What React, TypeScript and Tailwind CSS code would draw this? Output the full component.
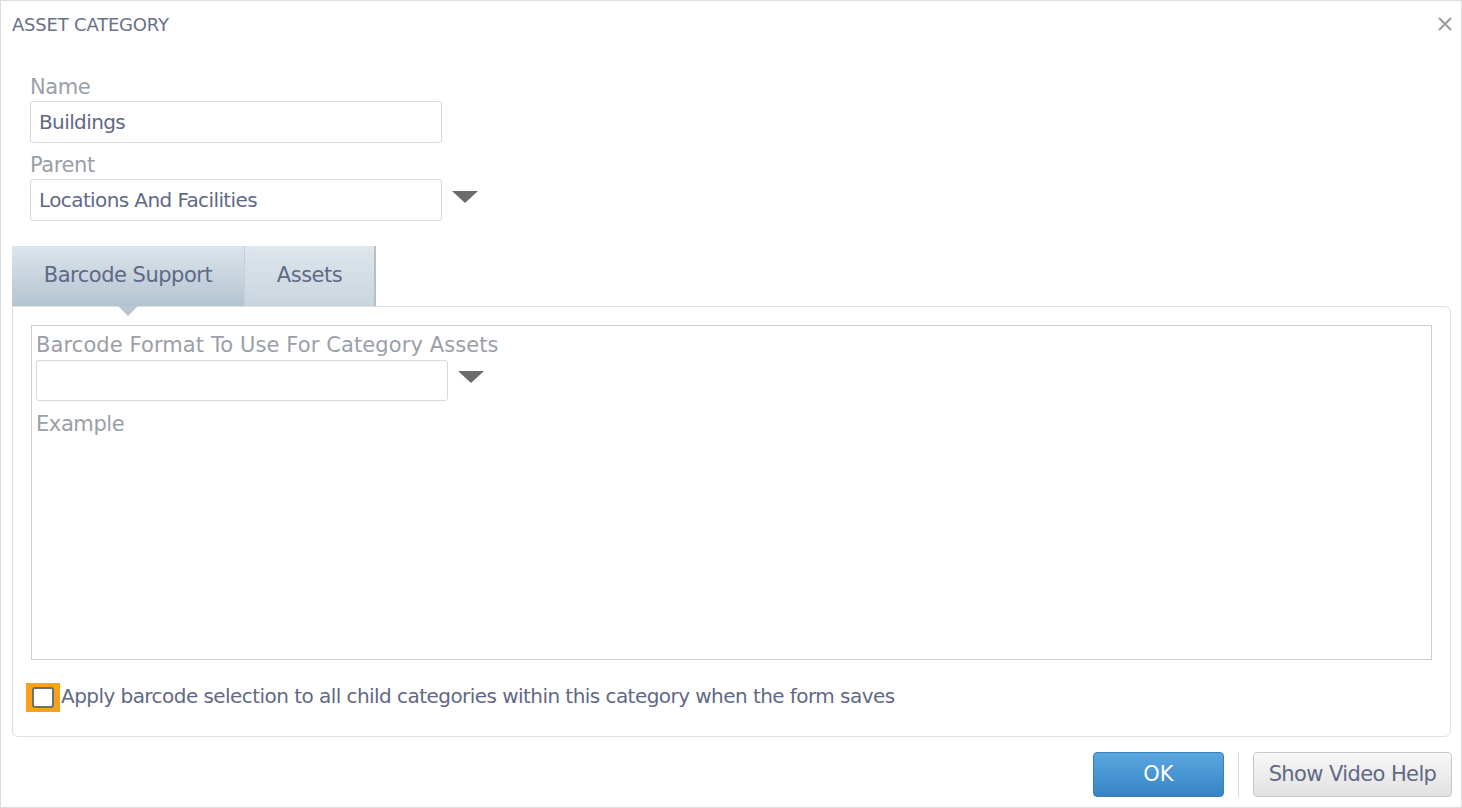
import React from "react";

const Tri = () => (
  <svg width="28" height="14" viewBox="0 0 28 14" className="shrink-0">
    <polygon points="1,1 27,1 14,13" fill="#6b6b6b" />
  </svg>
);

export default function App() {
  return (
    <div
      className="w-[1462px] h-[808px] bg-white flex flex-col border border-[#dcdcdc] overflow-hidden"
      style={{ fontFamily: "Tahoma, 'DejaVu Sans', 'Noto Sans', sans-serif" }}
    >
      <div className="flex items-center justify-between h-[46px] pl-[11px] pr-[8px]">
        <div className="text-[18px] text-[#68718b] tracking-[-0.2px]">ASSET CATEGORY</div>
        <svg width="14" height="14" viewBox="0 0 14 14" className="mr-[1px]">
          <path d="M1 1 L13 13 M13 1 L1 13" stroke="#9a9a9a" strokeWidth="2" />
        </svg>
      </div>
      <div className="pl-[29px] pt-[26px] flex flex-col">
        <div className="text-[21px] leading-[28px] text-[#9aa0a8] tracking-[-0.4px]">Name</div>
        <div className="w-[412px] h-[42px] border border-[#d9d9d9] rounded-[3px] flex items-center px-[8px] text-[20px] text-[#5f6985] tracking-[-0.6px]">
          Buildings
        </div>
        <div className="text-[21px] leading-[28px] text-[#9aa0a8] mt-[8px] tracking-[-0.4px]">Parent</div>
        <div className="flex items-start gap-[9px]">
          <div className="w-[412px] h-[42px] border border-[#d9d9d9] rounded-[3px] flex items-center px-[8px] text-[20px] text-[#5f6985] tracking-[-0.6px]">
            Locations And Facilities
          </div>
          <div className="pt-[11px]"><Tri /></div>
        </div>
      </div>
      <div className="pl-[11px] pr-[10px] mt-[25px] flex flex-col">
        <div className="flex h-[60px]">
          <div className="relative w-[233px] h-full flex items-center justify-center bg-gradient-to-b from-[#dde5ec] to-[#b3c4d1] border-r border-[#c4cfd8] text-[21px] text-[#5f6985] tracking-[-0.5px]">
            Barcode Support
            <div className="absolute left-[106px] -bottom-[10px] w-0 h-0 border-l-[10px] border-r-[10px] border-t-[10px] border-l-transparent border-r-transparent border-t-[#b6c6d2]" />
          </div>
          <div className="w-[131px] h-full flex items-center justify-center bg-gradient-to-b from-[#dfe6ec] to-[#c9d5de] border-r-2 border-[#b3c1cc] text-[21px] text-[#5f6985] tracking-[-0.5px]">
            Assets
          </div>
        </div>
        <div className="border border-[#e0e0e0] rounded-b-[6px] rounded-tr-[6px] h-[431px] flex flex-col pt-[18px] px-[18px]">
          <div className="h-[335px] border border-[#cfcfcf] flex flex-col pl-[4px] pt-[5px]">
            <div className="text-[21px] leading-[28px] text-[#9aa0a8] tracking-[0.1px]">Barcode Format To Use For Category Assets</div>
            <div className="flex items-start gap-[9px] mt-[1px]">
              <div className="w-[412px] h-[41px] border border-[#d9d9d9] rounded-[3px]" />
              <div className="pt-[10px]"><Tri /></div>
            </div>
            <div className="text-[21px] leading-[28px] text-[#9aa0a8] mt-[9px] tracking-[-0.4px]">Example</div>
          </div>
          <div className="flex items-center mt-[23px] -ml-[5px]">
            <div className="w-[34px] h-[29px] bg-[#f7a21b] flex items-center justify-center">
              <div className="w-[22px] h-[21px] bg-white border-2 border-[#6e6e6e] rounded-[3px]" />
            </div>
            <div className="ml-[1px] text-[20px] leading-[24px] -mt-[4px] text-[#5f6985] tracking-[-0.55px]">
              Apply barcode selection to all child categories within this category when the form saves
            </div>
          </div>
        </div>
      </div>
      <div className="flex items-center justify-end pr-[9px] mt-[15px] gap-[14px]">
        <div className="w-[131px] h-[45px] rounded-[4px] bg-gradient-to-b from-[#5aa7df] to-[#3684c6] border border-[#3a7fb8] flex items-center justify-center text-white text-[21px]">
          OK
        </div>
        <div className="w-px h-[45px] bg-[#dcdcdc]" />
        <div className="w-[199px] h-[45px] rounded-[4px] bg-gradient-to-b from-[#f7f7f7] to-[#e2e2e2] border border-[#c8c8c8] flex items-center justify-center text-[#5f6985] text-[21px] tracking-[-0.6px]">
          Show Video Help
        </div>
      </div>
    </div>
  );
}
